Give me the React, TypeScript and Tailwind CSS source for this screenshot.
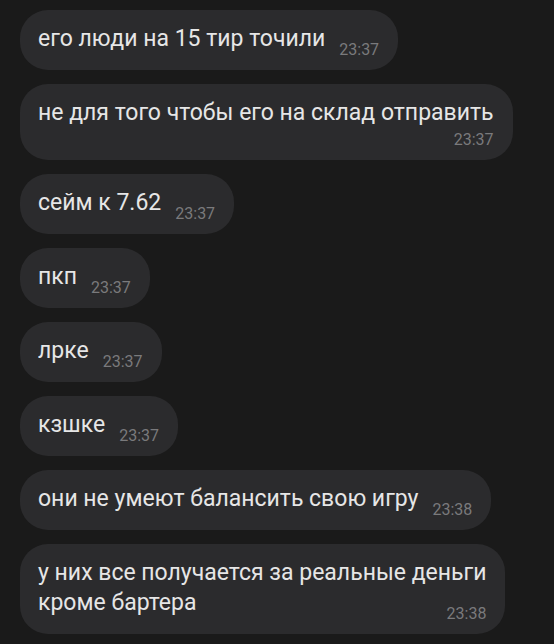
const font = { fontFamily: "Roboto, 'Noto Sans', sans-serif" }

type Msg = { text: string; time: string; mode: "inline" | "below" | "split"; last?: string }

const messages: Msg[] = [
  { text: "его люди на 15 тир точили", time: "23:37", mode: "inline" },
  { text: "не для того чтобы его на склад отправить", time: "23:37", mode: "below" },
  { text: "сейм к 7.62", time: "23:37", mode: "inline" },
  { text: "пкп", time: "23:37", mode: "inline" },
  { text: "лрке", time: "23:37", mode: "inline" },
  { text: "кзшке", time: "23:37", mode: "inline" },
  { text: "они не умеют балансить свою игру", time: "23:38", mode: "inline" },
  { text: "у них все получается за реальные деньги", last: "кроме бартера", time: "23:38", mode: "split" },
]

function Time({ t }: { t: string }) {
  return <span className="block text-[16px] leading-[20px] text-[#7a7a7c] whitespace-nowrap">{t}</span>
}

function Bubble({ m }: { m: Msg }) {
  const base = "bg-[#2b2b2d] rounded-[28px] pl-[18px] pr-[19px] pt-[14px] pb-[10px] text-[23px] leading-[30px] text-[#e6e6e6]"
  if (m.mode === "inline") {
    return (
      <div className={`${base} flex items-end gap-[14px] self-start`}>
        <span className="mb-[6px] whitespace-nowrap">{m.text}</span>
        <Time t={m.time} />
      </div>
    )
  }
  if (m.mode === "below") {
    return (
      <div className={`${base} flex flex-col items-end self-start`}>
        <span className="whitespace-nowrap">{m.text}</span>
        <div className="mt-[2px]">
          <Time t={m.time} />
        </div>
      </div>
    )
  }
  return (
    <div className={`${base} flex flex-col self-start`}>
      <span className="whitespace-nowrap">{m.text}</span>
      <div className="flex items-end justify-between">
        <span className="mb-[6px] whitespace-nowrap">{m.last}</span>
        <Time t={m.time} />
      </div>
    </div>
  )
}

export default function App() {
  return (
    <div className="min-h-screen w-[554px] h-[644px] overflow-hidden bg-[#1a1a1a] px-[20px] pt-[10px]" style={font}>
      <div className="flex flex-col gap-[14px]">
        {messages.map((m, i) => (
          <Bubble key={i} m={m} />
        ))}
      </div>
    </div>
  )
}
